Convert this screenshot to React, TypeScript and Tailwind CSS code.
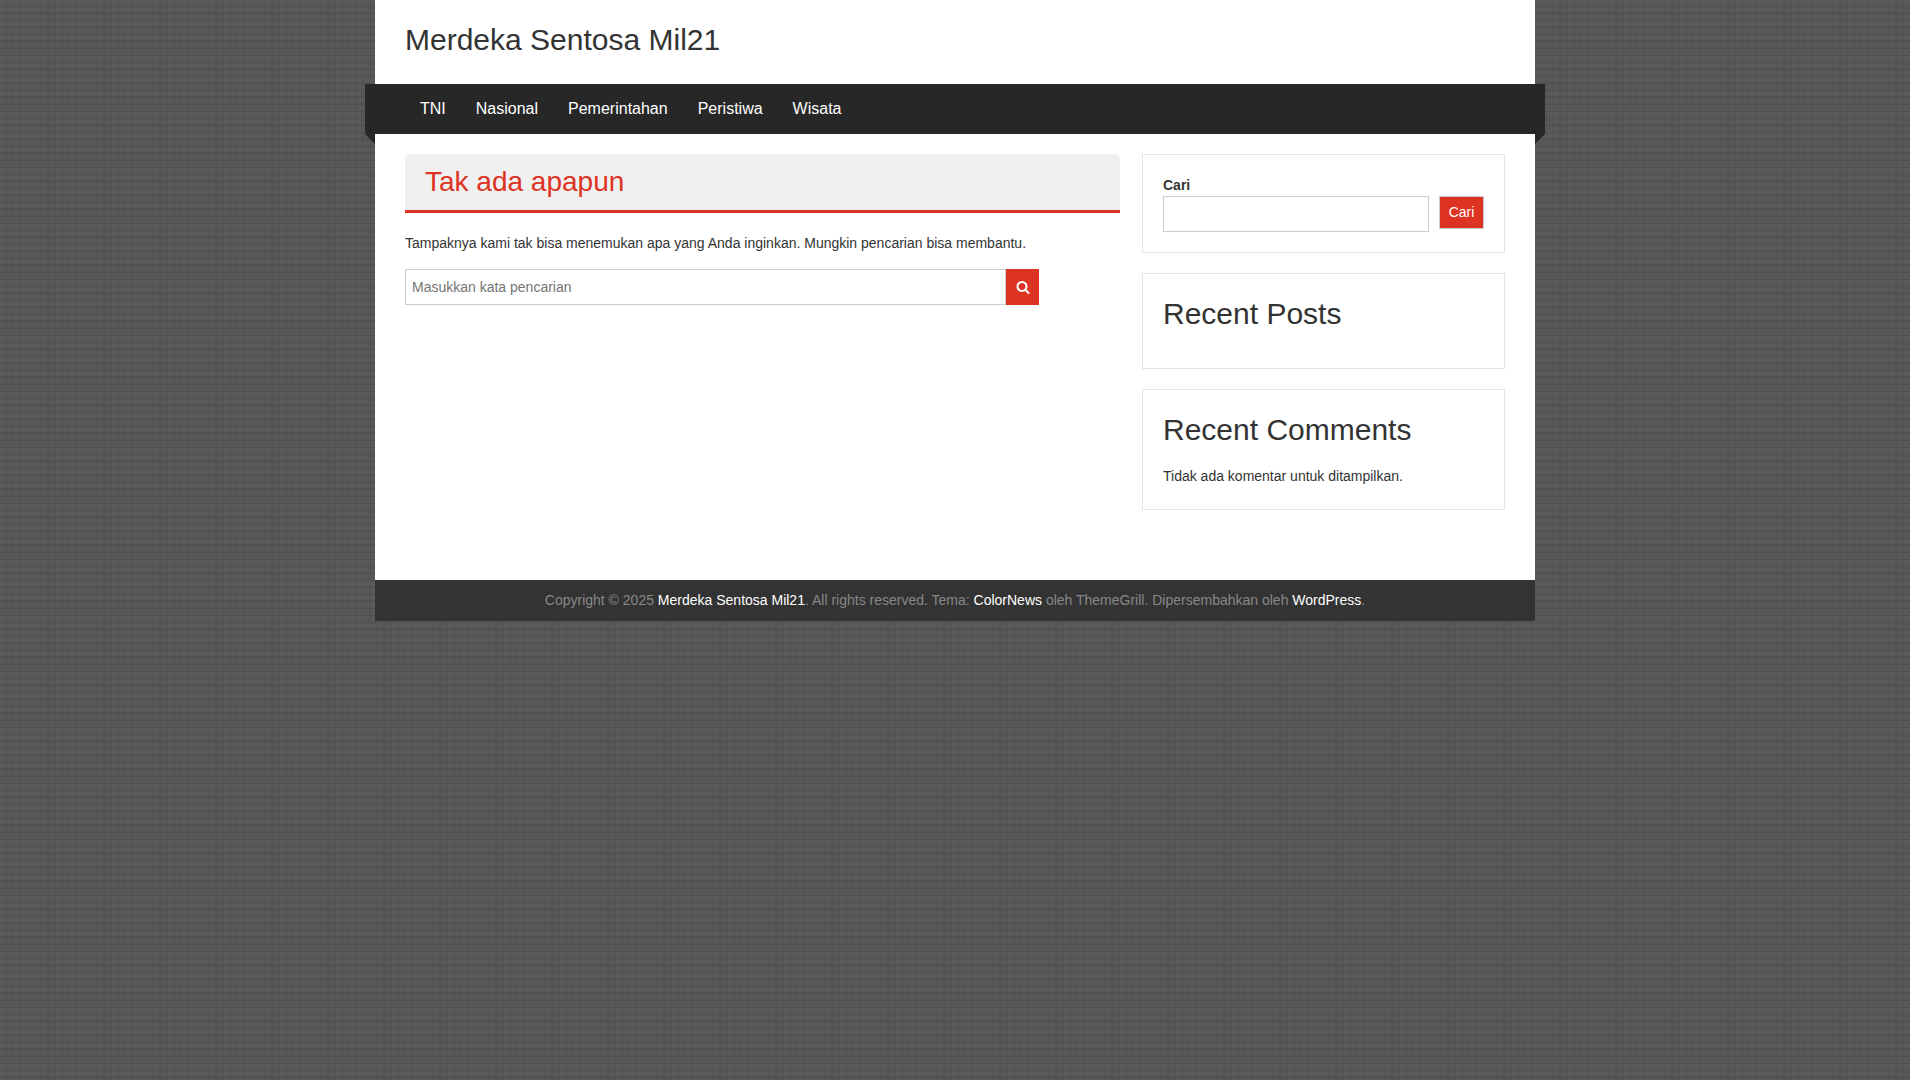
const menu = ["TNI", "Nasional", "Pemerintahan", "Peristiwa", "Wisata"];

const Backdrop = () => (
  <svg className="absolute inset-0 -z-10 h-full w-full" aria-hidden="true">
    <defs>
      <pattern id="bricks" width="7" height="14" patternUnits="userSpaceOnUse">
        <rect width="7" height="14" fill="#58595b" />
        <path d="M0 6h7v1H0z" fill="#4f5052" />
        <path d="M0 13h7v1H0z" fill="#4d4e50" />
        <path d="M6 0h1v6H6zM6 7h1v6H6z" fill="#525355" />
        <path d="M5 4h1v2H3V5h2zM5 11h1v2H3v-1h2z" fill="#535456" />
      </pattern>
    </defs>
    <rect width="100%" height="100%" fill="url(#bricks)" />
  </svg>
);

const SearchIcon = () => (
  <svg className="h-[14px] w-[14px]" viewBox="0 0 1792 1792" fill="currentColor" aria-hidden="true">
    <path d="M1216 832q0-185-131.5-316.5t-316.5-131.5-316.5 131.5-131.5 316.5 131.5 316.5 316.5 131.5 316.5-131.5 131.5-316.5zm512 832q0 52-38 90t-90 38q-54 0-90-38l-343-342q-179 124-399 124-143 0-273.5-55.5t-225-150-150-225-55.5-273.5 55.5-273.5 150-225 225-150 273.5-55.5 273.5 55.5 225 150 150 225 55.5 273.5q0 220-124 399l343 343q37 37 37 90z" />
  </svg>
);

const Header = () => (
  <header>
    <div className="px-[30px] pt-5 pb-6">
      <h1 className="text-[30px] leading-10">
        <a href="#">Merdeka Sentosa Mil21</a>
      </h1>
    </div>
    <nav className="relative -mx-[10px] bg-[#272727] px-10">
      <ul className="flex">
        {menu.map((item) => (
          <li key={item}>
            <a href="#" className="block px-[15px] py-3 text-base leading-[26px] text-white">
              {item}
            </a>
          </li>
        ))}
      </ul>
      {/* Folded ribbon ends */}
      <svg className="absolute top-full left-0 h-[10px] w-[10px]" viewBox="0 0 10 10" aria-hidden="true">
        <path d="M0 0h10v10z" fill="#272727" />
      </svg>
      <svg className="absolute top-full right-0 h-[10px] w-[10px]" viewBox="0 0 10 10" aria-hidden="true">
        <path d="M0 0h10L0 10z" fill="#272727" />
      </svg>
    </nav>
  </header>
);

const Content = () => (
  <main className="w-[65%]">
    <h2 className="rounded-t-[5px] border-b-3 border-[#dd3323] bg-[#f0f0f0] px-5 py-2 text-[28px] leading-10 text-[#dd3323]">
      Tak ada apapun
    </h2>
    <div className="mt-[18px] max-w-[634px]">
      <p className="leading-6">
        Tampaknya kami tak bisa menemukan apa yang Anda inginkan. Mungkin pencarian bisa membantu.
      </p>
      <form className="mt-[14px] flex h-9" onSubmit={(e) => e.preventDefault()}>
        <input
          type="search"
          aria-label="Masukkan kata pencarian"
          placeholder="Masukkan kata pencarian"
          className="min-w-0 flex-1 border border-[#cccccc] bg-white px-[6px] placeholder:text-[#757575]"
        />
        <button type="submit" aria-label="Cari" className="flex w-[33px] items-center justify-center bg-[#dd3323] text-white">
          <SearchIcon />
        </button>
      </form>
    </div>
  </main>
);

const Sidebar = () => (
  <aside className="flex w-[33%] flex-col gap-5">
    <section className="border border-[#e4e4e4] p-5">
      <form onSubmit={(e) => e.preventDefault()}>
        <label htmlFor="sidebar-search" className="block leading-[21px] font-bold">
          Cari
        </label>
        <div className="flex items-start gap-[10px]">
          <input id="sidebar-search" type="search" className="h-9 min-w-0 flex-1 border border-[#cccccc] bg-white px-[6px]" />
          <button type="submit" className="h-[33px] w-[45px] border border-[#cccccc] bg-[#dd3323] pb-[2px] text-white">
            Cari
          </button>
        </div>
      </form>
    </section>
    <section className="border border-[#e4e4e4] px-5 pt-5 pb-[34px]">
      <h2 className="text-[30px] leading-10">Recent Posts</h2>
    </section>
    <section className="border border-[#e4e4e4] px-5 pt-5 pb-[21px]">
      <h2 className="mb-[14px] text-[30px] leading-10">Recent Comments</h2>
      <p className="leading-6">Tidak ada komentar untuk ditampilkan.</p>
    </section>
  </aside>
);

const Footer = () => (
  <footer className="bg-[#333333] px-[30px] py-2 text-center leading-[25px] text-[#888888]">
    Copyright © 2025 <a href="#" className="text-white">Merdeka Sentosa Mil21</a>. All rights reserved. Tema:{" "}
    <a href="#" className="text-white">ColorNews</a> oleh ThemeGrill. Dipersembahkan oleh{" "}
    <a href="#" className="text-white">WordPress</a>.
  </footer>
);

export default function App() {
  return (
    <div className="bg-white pr-[10px] font-['Liberation_Sans',Arial,sans-serif] text-sm text-[#333333]">
      <div className="relative isolate min-h-screen">
        <Backdrop />
        <div className="mx-auto max-w-[1160px] bg-white">
          <Header />
          <div className="flex items-start justify-between px-[30px] pt-5 pb-[70px]">
            <Content />
            <Sidebar />
          </div>
          <Footer />
        </div>
      </div>
    </div>
  );
}
